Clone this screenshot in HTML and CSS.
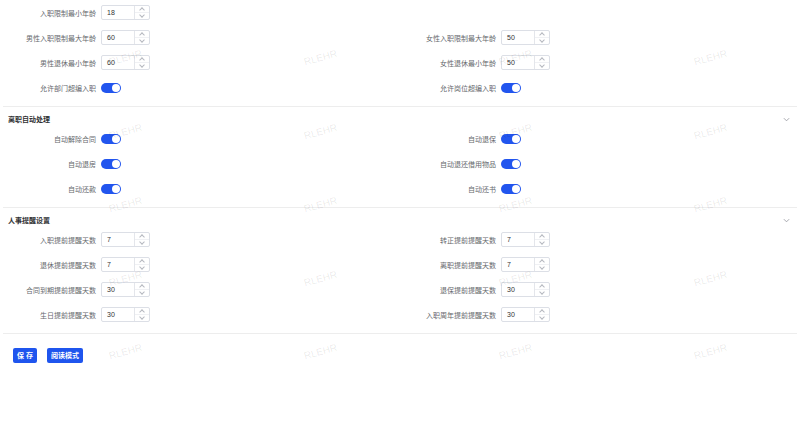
FILE: index.html
```html
<!DOCTYPE html>
<html lang="zh-CN">
<head>
    <meta charset="UTF-8">
    <title>参数设置</title>
    <link rel="stylesheet" href="styles.css">
</head>
<body>
    <div class="page">
        <div class="section">
            <div class="rows">
                <div class="item">
                    <label>入职限制最小年龄</label>
                    <div class="num"><span class="val">18</span><span class="spin"><i class="up"></i><i class="down"></i></span></div>
                </div>
                <div class="item"></div>
                <div class="item">
                    <label>男性入职限制最大年龄</label>
                    <div class="num"><span class="val">60</span><span class="spin"><i class="up"></i><i class="down"></i></span></div>
                </div>
                <div class="item">
                    <label>女性入职限制最大年龄</label>
                    <div class="num"><span class="val">50</span><span class="spin"><i class="up"></i><i class="down"></i></span></div>
                </div>
                <div class="item">
                    <label>男性退休最小年龄</label>
                    <div class="num"><span class="val">60</span><span class="spin"><i class="up"></i><i class="down"></i></span></div>
                </div>
                <div class="item">
                    <label>女性退休最小年龄</label>
                    <div class="num"><span class="val">50</span><span class="spin"><i class="up"></i><i class="down"></i></span></div>
                </div>
                <div class="item">
                    <label>允许部门超编入职</label>
                    <span class="switch on"></span>
                </div>
                <div class="item">
                    <label>允许岗位超编入职</label>
                    <span class="switch on"></span>
                </div>
            </div>
        </div>

        <div class="section">
            <div class="head">
                <span>离职自动处理</span>
                <svg class="arrow" viewBox="0 0 8 5" width="7" height="5"><path d="M1 1l3 3 3-3" fill="none" stroke="#9a9ca3" stroke-width="1"/></svg>
            </div>
            <div class="rows">
                <div class="item"><label>自动解除合同</label><span class="switch on"></span></div>
                <div class="item"><label>自动退保</label><span class="switch on"></span></div>
                <div class="item"><label>自动退房</label><span class="switch on"></span></div>
                <div class="item"><label>自动退还借用物品</label><span class="switch on"></span></div>
                <div class="item"><label>自动还款</label><span class="switch on"></span></div>
                <div class="item"><label>自动还书</label><span class="switch on"></span></div>
            </div>
        </div>

        <div class="section">
            <div class="head">
                <span>人事提醒设置</span>
                <svg class="arrow" viewBox="0 0 8 5" width="7" height="5"><path d="M1 1l3 3 3-3" fill="none" stroke="#9a9ca3" stroke-width="1"/></svg>
            </div>
            <div class="rows">
                <div class="item">
                    <label>入职提前提醒天数</label>
                    <div class="num"><span class="val">7</span><span class="spin"><i class="up"></i><i class="down"></i></span></div>
                </div>
                <div class="item">
                    <label>转正提前提醒天数</label>
                    <div class="num"><span class="val">7</span><span class="spin"><i class="up"></i><i class="down"></i></span></div>
                </div>
                <div class="item">
                    <label>退休提前提醒天数</label>
                    <div class="num"><span class="val">7</span><span class="spin"><i class="up"></i><i class="down"></i></span></div>
                </div>
                <div class="item">
                    <label>离职提前提醒天数</label>
                    <div class="num"><span class="val">7</span><span class="spin"><i class="up"></i><i class="down"></i></span></div>
                </div>
                <div class="item">
                    <label>合同到期提前提醒天数</label>
                    <div class="num"><span class="val">30</span><span class="spin"><i class="up"></i><i class="down"></i></span></div>
                </div>
                <div class="item">
                    <label>退保提前提醒天数</label>
                    <div class="num"><span class="val">30</span><span class="spin"><i class="up"></i><i class="down"></i></span></div>
                </div>
                <div class="item">
                    <label>生日提前提醒天数</label>
                    <div class="num"><span class="val">30</span><span class="spin"><i class="up"></i><i class="down"></i></span></div>
                </div>
                <div class="item">
                    <label>入职周年提前提醒天数</label>
                    <div class="num"><span class="val">30</span><span class="spin"><i class="up"></i><i class="down"></i></span></div>
                </div>
            </div>
        </div>

        <div class="actions">
            <button class="btn">保 存</button>
            <button class="btn">阅读模式</button>
        </div>
    </div>

    <!-- 水印层 -->
    <div class="watermark">
        <span>RLEHR</span><span>RLEHR</span><span>RLEHR</span><span>RLEHR</span>
        <span>RLEHR</span><span>RLEHR</span><span>RLEHR</span><span>RLEHR</span>
        <span>RLEHR</span><span>RLEHR</span><span>RLEHR</span><span>RLEHR</span>
        <span>RLEHR</span><span>RLEHR</span><span>RLEHR</span><span>RLEHR</span>
        <span>RLEHR</span><span>RLEHR</span><span>RLEHR</span><span>RLEHR</span>
    </div>
</body>
</html>
```

FILE: styles.css
```css
html,body{
    margin:0; padding:0; height:100%; background:#fff;
}
body{
    font-family:"Liberation Sans","Noto Sans CJK SC",sans-serif;
    font-size:7px; color:#66686d; position:relative; overflow:hidden;
}
.page{
    width:800px;
}
.section{
    margin:0 3px; padding-bottom:6px; border-bottom:1px solid #ededed;
}
.section .head{
    display:flex; justify-content:space-between; align-items:center;
    padding:5px 7px 0 5px; height:14px;
    color:#303133; font-weight:bold;
}
.section .head .arrow{
    display:block;
}
.rows{
    display:grid; grid-template-columns:397px 397px;
}
.item{
    height:25px; display:flex; align-items:center;
}
.rows .item:nth-child(odd) label{
    width:93px;
}
.item label{
    width:96px; text-align:right; padding-right:5px; white-space:nowrap;
}

/* 数字输入框 */
.num{
    width:47px; height:13px; border:1px solid #dcdfe6; border-radius:2px;
    display:flex; background:#fff;
}
.num .val{
    flex:1; padding-left:5px; line-height:13px; color:#333;
}
.num .spin{
    width:14px; border-left:1px solid #e4e6eb; display:flex; flex-direction:column;
}
.num .spin i{
    flex:1; position:relative;
}
.num .spin i.up{
    border-bottom:1px solid #f0f1f4;
}
.num .spin i::after{
    content:""; position:absolute; left:5px; width:3px; height:3px;
    border-left:1px solid #b5b8bf; border-top:1px solid #b5b8bf;
}
.num .spin i.up::after{
    top:2px; transform:rotate(45deg);
}
.num .spin i.down::after{
    top:0; transform:rotate(225deg);
}

/* 开关 */
.switch{
    width:20px; height:10px; border-radius:5px; background:#dcdfe6; position:relative;
}
.switch.on{
    background:#2255ee;
}
.switch::after{
    content:""; position:absolute; top:1px; left:1px; width:8px; height:8px;
    border-radius:50%; background:#fff;
}
.switch.on::after{
    left:11px;
}

.actions{
    display:flex; gap:10px; padding:14px 0 0 13px;
}
.btn{
    height:15px; padding:0 4px; border:none; border-radius:2px;
    background:#1f55ee; color:#fff; font-family:inherit; font-size:7px; font-weight:bold;
    line-height:15px;
}

.watermark{
    position:absolute; top:21px; left:28px; pointer-events:none;
    display:grid; grid-template-columns:repeat(4,195px); grid-auto-rows:73.5px;
}
.watermark span{
    display:flex; align-items:center; justify-content:center;
    font-family:"Liberation Sans",sans-serif; font-size:10px;
    color:rgba(0,0,0,0.09); transform:rotate(-15deg);
}
```
